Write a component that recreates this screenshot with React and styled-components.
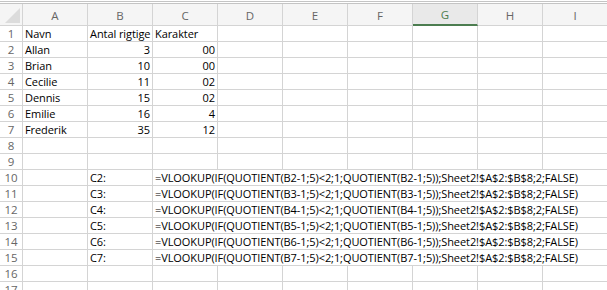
import styled, { createGlobalStyle } from "styled-components";

const GlobalStyle = createGlobalStyle`
	html, body {
		margin: 0;
		padding: 0;
		background: #ffffff;
		overflow: hidden;
	}
	body {
		font-family: "Open Sans", "Liberation Sans", sans-serif;
	}
`;

const columns = ["A", "B", "C", "D", "E", "F", "G", "H", "I"];

const data = [
	["Navn", "Antal rigtige", "Karakter"],
	["Allan", "3", "00"],
	["Brian", "10", "00"],
	["Cecilie", "11", "02"],
	["Dennis", "15", "02"],
	["Emilie", "16", "4"],
	["Frederik", "35", "12"],
];

const formula = (n) =>
	`=VLOOKUP(IF(QUOTIENT(B${n}-1;5)<2;1;QUOTIENT(B${n}-1;5));Sheet2!$A$2:$B$8;2;FALSE)`;

const App = () => {
	const rows = [];
	for (let r = 1; r <= 17; r++) {
		const d = data[r - 1];
		let cells;
		if (d) {
			cells = (
				<>
					<Cell>{d[0]}</Cell>
					<Cell $num={r > 1}>{d[1]}</Cell>
					<Cell $num={r > 1}>{d[2]}</Cell>
					{columns.slice(3).map((c) => (
						<Cell key={c} />
					))}
				</>
			);
		} else if (r >= 10 && r <= 15) {
			cells = (
				<>
					<Cell />
					<Cell>C{r - 8}:</Cell>
					<Cell $span={7}>{formula(r - 8)}</Cell>
				</>
			);
		} else {
			cells = columns.map((c) => <Cell key={c} />);
		}
		rows.push(
			<Row key={r}>
				<RowNum>{r}</RowNum>
				{cells}
			</Row>
		);
	}

	return (
		<>
			<GlobalStyle />
			<Sheet>
				<HeaderRow>
					<Corner>
						<svg width="15" height="15" viewBox="0 0 15 15">
							<polygon points="15,0 15,15 0,15" fill="#dcdcdc" />
						</svg>
					</Corner>
					{columns.map((c) => (
						<ColHead key={c} $active={c === "G"}>
							{c}
						</ColHead>
					))}
				</HeaderRow>
				{rows}
			</Sheet>
		</>
	);
};

export default App;

const Sheet = styled.div`
	width: 608px;
	margin-top: 1px;
	border-top: 1px solid #c4c4c4;
	padding-top: 1px;
	font-size: 11px;
	color: #000;
`;

const HeaderRow = styled.div`
	display: grid;
	grid-template-columns: 23px repeat(9, 65px);
	height: 22px;
	border-top: 1px solid #c4c4c4;
	background: #f5f5f5;
`;

const Corner = styled.div`
	box-sizing: border-box;
	border-right: 1px solid #d4d4d4;
	border-bottom: 1px solid #d4d4d4;
	display: flex;
	align-items: flex-end;
	justify-content: flex-end;
	padding: 0 2px 2px 0;
`;

const ColHead = styled.div`
	box-sizing: border-box;
	border-right: 1px solid #d4d4d4;
	border-bottom: ${(p) => (p.$active ? "2px solid #4c7d50" : "1px solid #d4d4d4")};
	background: ${(p) => (p.$active ? "#e9e9e9" : "transparent")};
	color: ${(p) => (p.$active ? "#4c7d50" : "#666")};
	display: flex;
	align-items: center;
	justify-content: center;
	font-size: 11.5px;
	padding-top: 1px;
`;

const Row = styled.div`
	display: grid;
	grid-template-columns: 23px repeat(9, 65px);
	height: 16px;
`;

const RowNum = styled.div`
	box-sizing: border-box;
	border-right: 1px solid #d4d4d4;
	border-bottom: 1px solid #d4d4d4;
	background: #ffffff;
	color: #666;
	text-align: center;
	line-height: 15px;
	font-size: 11.5px;
`;

const Cell = styled.div`
	box-sizing: border-box;
	grid-column: ${(p) => (p.$span ? `span ${p.$span}` : "auto")};
	border-right: 1px solid #d4d4d4;
	border-bottom: 1px solid #d4d4d4;
	line-height: 15px;
	padding: 0 2px 0 2px;
	white-space: nowrap;
	overflow: visible;
	text-align: ${(p) => (p.$num ? "right" : "left")};
	font-size: 11px;
	letter-spacing: -0.08px;
`;
